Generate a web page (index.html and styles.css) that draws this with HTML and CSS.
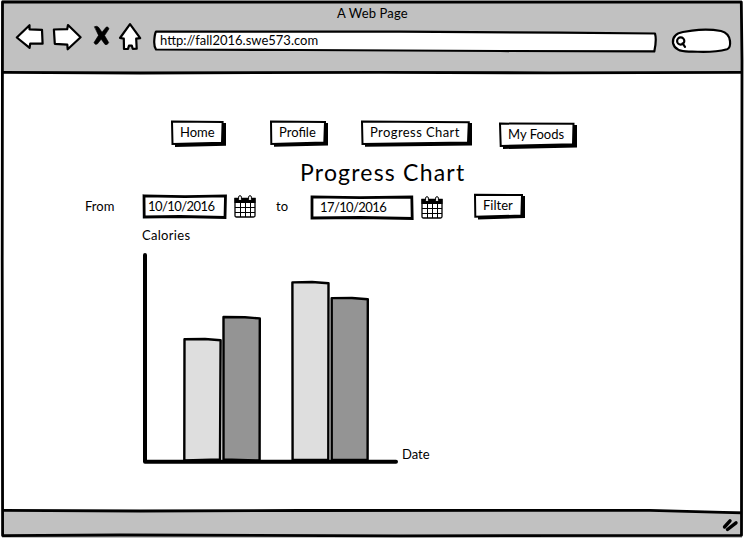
FILE: index.html
```
<!DOCTYPE html>
<html lang="en">
<head>
<meta charset="utf-8">
<title>A Web Page</title>
<link rel="stylesheet" href="styles.css">
</head>
<body>
<div class="window">
  <header class="chrome">
    <div class="window-title"><span>A Web Page</span></div>
    <div class="toolbar">
      <svg class="back" width="30" height="30" viewBox="15 22 30 30"><path d="M16.8 37.5 29.5 25.2V29.3L42 29.8 42.6 43.7 30.2 43.6 29.6 47.8Z"/></svg>
      <svg class="forward" width="32" height="30" viewBox="52 22 32 30"><path d="M53.9 29.5 67.2 29.2 68 25 80.6 37.2 67.7 49.3 67.3 44.6 54.8 43.8Z"/></svg>
      <svg class="stop" width="20" height="30" viewBox="92 22 20 30"><path d="M94.6 26.6Q97 25.4 98.8 27.6L102 32.2 106 27.3Q107.6 25.8 109 28.8L104.6 35.6 108.7 42.6Q107.5 45.5 105 44.4L101.2 39.2 97.3 44Q94.8 45.2 94 42.6L98.4 35.6Z"/></svg>
      <svg class="up" width="24" height="30" viewBox="118 22 24 30"><path d="M130 24.2 140.2 38.2 136.2 38.7 136.7 48.7 132.7 48.8 131.8 45.6H129L128 48.8 124 49 123.8 38.7 120 38Z"/></svg>
      <div class="address">
        <svg class="art" viewBox="153 29 506 24"><path d="M156 31.5 400 31.7 560 32.7 655 33.5Q656.8 40 654.3 51.4L500 51 300 50 156 49.5Q153.8 46 154.3 40Q154.7 34 156 31.5Z"/></svg>
        <span>http://fall2016.swe573.com</span>
      </div>
      <svg class="search" width="62" height="30" viewBox="671 27 62 30"><path d="M692 30.6Q707 28.3 721 31Q729 33 730 41Q730.8 48 727 49.2Q713 53 692 51.5Q675 52.5 673 43Q672 34 683 32Z"/><circle cx="680.7" cy="41" r="3.6"/><path d="M682.5 43.3 685 46.8"/></svg>
    </div>
  </header>

  <main class="page">
    <nav class="menu">
      <a class="button home"><svg class="art" viewBox="171 120 56 28"><path class="shadow" d="M175 123H226V145.7L175 147Z"/><path d="M172 121.6 222.6 122 222 142.7 172.5 144Z"/></svg><span>Home</span></a>
      <a class="button profile"><svg class="art" viewBox="270 120 59 28"><path class="shadow" d="M274 123H328V145.5L274 146.8Z"/><path d="M271 121.6 325 122 324.3 142.5 271.3 144Z"/></svg><span>Profile</span></a>
      <a class="button progress"><svg class="art" viewBox="361 120 112 28"><path class="shadow" d="M365 123H472V145.6L365 146.8Z"/><path d="M362 121.6 468.8 122.2 468 142.5 362.5 144Z"/></svg><span>Progress Chart</span></a>
      <a class="button foods"><svg class="art" viewBox="499 122 79 28"><path class="shadow" d="M503 125H577V147.4L503 149Z"/><path d="M500 123.6 573.5 123.8 573 144.2 500.7 145.9Z"/></svg><span>My Foods</span></a>
    </nav>

    <h1><span>Progress Chart</span></h1>

    <div class="filters">
      <label class="from">From</label>
      <div class="field start"><svg class="art" viewBox="142 194 86 26"><path d="M144 195.8 185 196.6 225.5 195.9 225 217.5 180 216.5 144.2 217Z"/></svg><span>10/10/2016</span></div>
      <svg class="calendar" viewBox="0 0 22 23"><use href="#calendar"/></svg>
      <label class="to">to</label>
      <div class="field end"><svg class="art" viewBox="310 195 104 26"><path d="M312 196.8 360 197.6 411.8 197 412.2 218.5 360 217.5 312 218Z"/></svg><span>17/10/2016</span></div>
      <svg class="calendar" viewBox="0 0 22 23"><use href="#calendar"/></svg>
      <a class="button filter"><svg class="art" viewBox="474 193 52 28"><path class="shadow" d="M478 196H525V218L478 219.5Z"/><path d="M475 194.7 522 195 521.4 215.6 475.3 216.7Z"/></svg><span>Filter</span></a>
    </div>

    <section class="graph">
      <div class="y-label">Calories</div>
      <div class="plot">
        <svg class="bars" width="256" height="214" viewBox="142 252 256 214">
          <path class="light" d="M184.5 339.3 205 339 220.6 340.2 220 459.5 184.3 460.5Z"/>
          <path class="dark" d="M223.5 317 245 317.2 259.8 318.4 259.6 460.5 223.5 459.5Z"/>
          <path class="light" d="M292.4 282.4 312 282 328.5 283.3 328.3 460 292.6 460Z"/>
          <path class="dark" d="M331.7 298.1 352 298 367.8 299.2 367.6 460 331.7 460Z"/>
          <path class="axis" d="M145 255V461.7H396"/>
        </svg>
        <span class="x-label">Date</span>
      </div>
    </section>
  </main>

  <footer class="status">
    <svg width="18" height="16" viewBox="721 517 18 16"><path d="M724.5 527 730 520.8M727.5 529.5 736 522.8"/></svg>
  </footer>

  <svg class="frame" width="744" height="538" viewBox="0 0 744 538">
    <path d="M2.5 2 741.3 2.1 742 60 741.5 535.3 400 535.8 120 535 2.6 535.6 2.2 260Z"/>
    <path d="M2.8 72.4 140 73 380 72.3 550 72.9 742 72.3M2.8 510.3 140 511 300 510.5 650 510.3 741.5 512.8"/>
  </svg>
</div>

<svg class="symbols" width="0" height="0">
  <symbol id="calendar" viewBox="0 0 22 23">
    <path d="M1 3.5H21V20.5Q21 22 19.5 22H2.5Q1 22 1 20.5Z" fill="#fff" stroke="#000" stroke-width="1.3"/>
    <path d="M.5 3H21.5V8H.5Z"/>
    <path d="M1 12.5H21M1 17.5H21M6.5 8V22M11.5 8V22M16.5 8V22" fill="none" stroke="#000" stroke-width="1"/>
    <rect x="4.6" y=".7" width="2.8" height="5" rx="1.4" fill="#fff" stroke="#000"/>
    <rect x="14.6" y=".7" width="2.8" height="5" rx="1.4" fill="#fff" stroke="#000"/>
  </symbol>
</svg>
</body>
</html>
```
FILE: styles.css
```
* { box-sizing: border-box; }
body { margin: 0; background: #fff; color: #000; font: 13px/18px Lato, "Open Sans", sans-serif; }
svg { display: block; flex: none; overflow: visible; }
span, label { white-space: nowrap; }
.window { position: relative; width: 744px; height: 538px; display: flex; flex-direction: column; overflow: hidden; }
.frame { position: absolute; inset: 0; fill: none; stroke: #000; stroke-width: 2.8; stroke-linejoin: round; pointer-events: none; }
.symbols { position: absolute; }
.chrome { height: 73px; background: #c1c1c1; margin: 0 2px; padding-top: 4px; }
.window-title { height: 18px; padding-left: 335px; letter-spacing: .15px; }
.toolbar { display: flex; height: 30px; padding-left: 13px; fill: #fff; stroke: #000; stroke-width: 2.2; stroke-linejoin: round; stroke-linecap: round; }
.forward { margin-left: 7px; }
.stop { margin-left: 8px; fill: #000; stroke-width: .6; }
.up { margin-left: 6px; }
.address { position: relative; width: 506px; height: 24px; margin: 7px 0 0 11px; padding: 2px 0 0 7px; letter-spacing: 0; }
.search { margin: 5px 0 0 12px; }
.art { position: absolute; inset: 0; width: 100%; height: 100%; }
.address span, .button span, .field span { position: relative; }
.page { flex: 1; padding-top: 47px; }
.menu { display: flex; height: 30px; padding-left: 171px; }
.button { position: relative; display: block; height: 28px; padding: 3px 0 0 9px; }
.button .art { fill: #fff; stroke: #000; stroke-width: 2; }
.button .shadow { fill: #000; stroke: none; }
.home { width: 56px; }
.profile { width: 59px; margin-left: 43px; }
.progress { width: 112px; margin-left: 32px; }
.foods { width: 79px; margin: 2px 0 0 26px; }
.progress span { letter-spacing: .42px; }
h1 { margin: 7px 0 0 300px; height: 31px; font-size: 23px; line-height: 30px; font-weight: 400; letter-spacing: 1.2px; }
.filters { display: flex; height: 28px; margin-top: 5px; padding-left: 85px; }
.from { width: 57px; padding-top: 4px; }
.field { position: relative; height: 26px; margin-top: 1px; padding: 3px 0 0 6px; letter-spacing: -.55px; }
.field .art { fill: #fff; stroke: #000; stroke-width: 2.8; }
.start { width: 86px; }
.end { width: 104px; margin-top: 2px; padding-left: 10px; }
.end span { letter-spacing: -.6px; }
.calendar { width: 22px; height: 23px; margin: 2px 0 0 6px; }
.end + .calendar { margin: 3px 0 0 7px; }
.to { width: 34px; margin-left: 20px; padding-top: 4px; }
.filter { width: 52px; margin-left: 31px; }
.graph { padding-left: 142px; margin-top: 5px; }
.y-label { height: 26px; letter-spacing: .3px; }
.plot { display: flex; align-items: flex-end; }
.bars { stroke: #000; stroke-width: 2.4; stroke-linejoin: round; }
.light { fill: #dedede; }
.dark { fill: #949494; }
.axis { fill: none; stroke-width: 4; stroke-linecap: round; }
.x-label { margin: 0 0 3px 4px; }
.status { height: 27px; margin: 0 2px; background: #c1c1c1; display: flex; justify-content: flex-end; padding: 6px 3px 0 0; }
.status svg { fill: none; stroke: #000; stroke-width: 3.4; stroke-linecap: round; }
```
